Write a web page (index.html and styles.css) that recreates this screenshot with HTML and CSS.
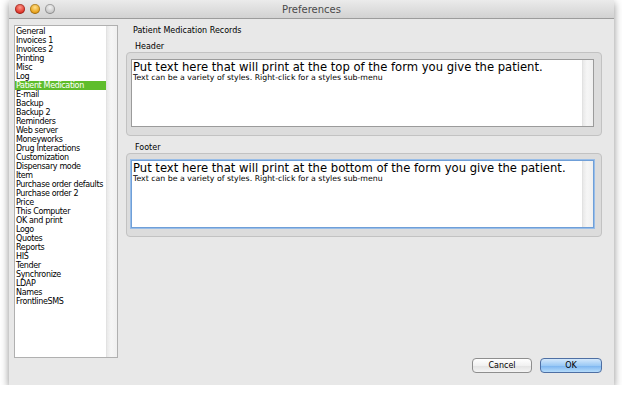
FILE: index.html
```html
<!DOCTYPE html>
<html lang="en">
<head>
    <meta charset="UTF-8">
    <title>Preferences</title>
    <link rel="stylesheet" href="styles.css">
</head>
<body>
    <div class="window">
        <div class="titlebar">
            <div class="lights">
                <span class="light red"></span>
                <span class="light yellow"></span>
                <span class="light grey"></span>
            </div>
            <div class="title">Preferences</div>
        </div>

        <div class="content">
            <div class="list">
                <ul class="items">
                    <li>General</li>
                    <li>Invoices 1</li>
                    <li>Invoices 2</li>
                    <li>Printing</li>
                    <li>Misc</li>
                    <li>Log</li>
                    <li class="selected">Patient Medication</li>
                    <li>E-mail</li>
                    <li>Backup</li>
                    <li>Backup 2</li>
                    <li>Reminders</li>
                    <li>Web server</li>
                    <li>Moneyworks</li>
                    <li>Drug Interactions</li>
                    <li>Customization</li>
                    <li>Dispensary mode</li>
                    <li>Item</li>
                    <li>Purchase order defaults</li>
                    <li>Purchase order 2</li>
                    <li>Price</li>
                    <li>This Computer</li>
                    <li>OK and print</li>
                    <li>Logo</li>
                    <li>Quotes</li>
                    <li>Reports</li>
                    <li>HIS</li>
                    <li>Tender</li>
                    <li>Synchronize</li>
                    <li>LDAP</li>
                    <li>Names</li>
                    <li>FrontlineSMS</li>
                </ul>
                <div class="scroll"></div>
            </div>

            <div class="main">
                <div class="page-title">Patient Medication Records</div>

                <div class="group-label">Header</div>
                <div class="group">
                    <div class="editor">
                        <div class="text">
                            <p class="big">Put text here that will print at the top of the form you give the patient.</p>
                            <p class="small">Text can be a variety of styles. Right-click for a styles sub-menu</p>
                        </div>
                        <div class="scroll"></div>
                    </div>
                </div>

                <div class="group-label footer-label">Footer</div>
                <div class="group">
                    <div class="editor focused">
                        <div class="text">
                            <p class="big">Put text here that will print at the bottom of the form you give the patient.</p>
                            <p class="small">Text can be a variety of styles. Right-click for a styles sub-menu</p>
                        </div>
                        <div class="scroll"></div>
                    </div>
                </div>

                <div class="buttons">
                    <button class="btn">Cancel</button>
                    <button class="btn default">OK</button>
                </div>
            </div>
        </div>
    </div>
</body>
</html>
```

FILE: styles.css
```css
body {
    margin: 0;
    background: #ffffff;
    font-family: "DejaVu Sans", Verdana, sans-serif;
    color: #000;
}
.window {
    margin-left: 9px;
    width: 605px;
    height: 385px;
    background: #e8e8e8;
    box-shadow: 0 3px 8px rgba(0, 0, 0, 0.45);
    display: flex;
    flex-direction: column;
}
.titlebar {
    height: 18px;
    position: relative;
    background: linear-gradient(#ebebeb, #d2d2d2);
    border-bottom: 1px solid #9c9c9c;
    display: flex;
    align-items: center;
    justify-content: center;
}
.lights {
    position: absolute;
    left: 6px;
    top: 4px;
    display: flex;
    gap: 5px;
}
.light {
    width: 10px;
    height: 10px;
    border-radius: 50%;
    box-shadow: inset 0 0 0 1px rgba(0, 0, 0, 0.25);
}
.red { background: radial-gradient(circle at 50% 35%, #ff9b8c, #e0362b 60%, #a0140c); }
.yellow { background: radial-gradient(circle at 50% 35%, #ffe08a, #e8a21c 60%, #a56400); }
.grey { background: radial-gradient(circle at 50% 35%, #f2f2f2, #c8c8c8 60%, #969696); }
.title {
    font-size: 10px;
    color: #4a4a4a;
}
.content {
    flex: 1;
    display: flex;
    padding: 6px 12px 12px 5px;
    gap: 8px;
}
.list {
    width: 102px;
    height: 331px;
    border: 1px solid #b0b0b0;
    background: #fff;
    display: flex;
}
.items {
    flex: 1;
    list-style: none;
    margin: 0;
    padding: 1px 0 0 0;
    font-size: 8px;
    line-height: 9px;
    letter-spacing: -0.35px;
}
.items li {
    padding-left: 1px;
    white-space: nowrap;
}
.items li.selected {
    background: #5fbd2c;
    color: #fff;
}
.scroll {
    width: 10px;
    background: linear-gradient(90deg, #e9e9e9, #f6f6f6 40%, #f0f0f0);
    border-left: 1px solid #e2e2e2;
}
.main {
    flex: 1;
    display: flex;
    flex-direction: column;
}
.page-title {
    font-size: 8px;
    padding-left: 7px;
    margin-top: 1px;
    height: 12px;
}
.group-label {
    font-size: 8px;
    padding-left: 9px;
    margin-top: 4px;
    height: 10px;
}
.footer-label {
    margin-top: 7px;
}
.group {
    background: #dcdcdc;
    border: 1px solid #c2c2c2;
    border-radius: 4px;
    padding: 6px 7px 8px 4px;
    height: 68px;
    display: flex;
}
.editor {
    flex: 1;
    display: flex;
    background: #fff;
    border: 1px solid #9b9b9b;
}
.editor.focused {
    border-color: #6f9fd8;
    box-shadow: 0 0 0 1px #98bde8;
}
.text {
    flex: 1;
    padding: 1px 1px 0 1px;
}
.text p {
    margin: 0;
}
.big {
    font-size: 11.6px;
    line-height: 13px;
}
.small {
    font-size: 7.8px;
    line-height: 8px;
}
.buttons {
    margin-top: auto;
    display: flex;
    justify-content: flex-end;
    gap: 8px;
}
.btn {
    width: 60px;
    height: 15px;
    font-family: "DejaVu Sans", Verdana, sans-serif;
    font-size: 8px;
    border: 1px solid #8e8e8e;
    border-radius: 4px;
    background: linear-gradient(#ffffff, #f1f1f1 50%, #e2e2e2 51%, #f4f4f4);
    padding: 0;
}
.btn.default {
    width: 62px;
    border-color: #4e6fa3;
    background: linear-gradient(#d4e8fb, #9ccaf5 50%, #79b3ef 51%, #b6dcfb);
}
```
